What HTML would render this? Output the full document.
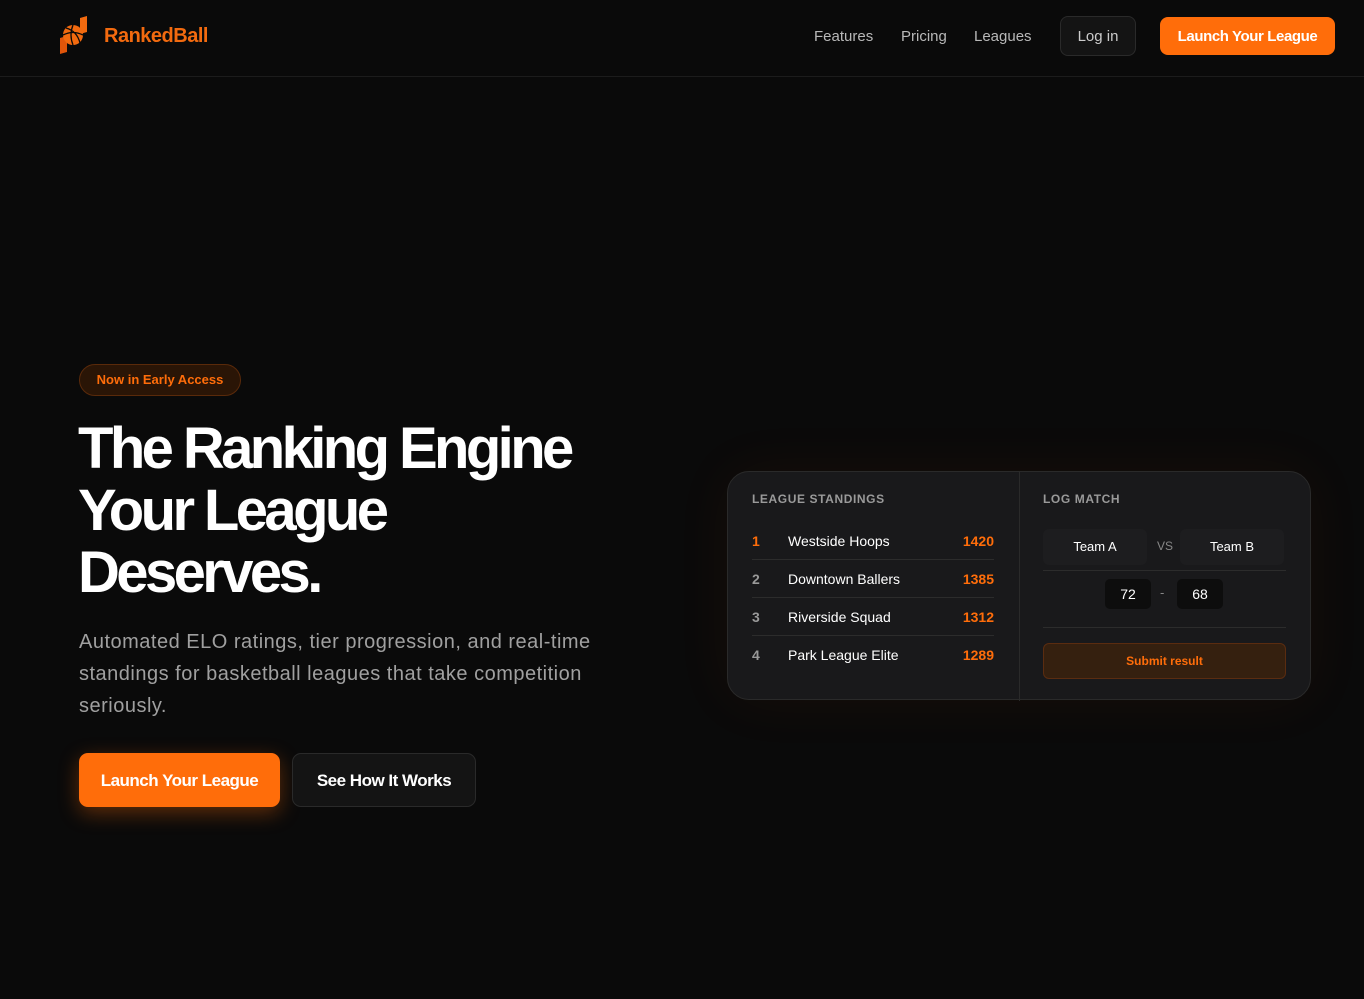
<!DOCTYPE html>
<html><head><meta charset="utf-8"><style>
*{box-sizing:border-box;margin:0;padding:0}
body{width:1364px;height:999px;background:#0a0a0a;font-family:"Liberation Sans",sans-serif;color:#fff;position:relative;overflow:hidden}
.nav{position:absolute;left:0;top:0;width:1364px;height:77px;border-bottom:1px solid #1c1c1c}
.logo{position:absolute;left:104px;top:25px;color:#f26a0f;font-weight:bold;font-size:20px;letter-spacing:-0.5px}
.nl{position:absolute;top:28px;font-size:15px;color:#b8b8b8}
.login{position:absolute;left:1060px;top:16px;width:76px;height:40px;border:1px solid #2a2a2a;border-radius:8px;background:#141414;color:#ccc;font-size:15px;text-align:center;line-height:40px}
.launch{position:absolute;left:1160px;top:17px;width:175px;height:38px;border-radius:8px;background:#ff6d0a;font-size:15px;font-weight:bold;text-align:center;line-height:39px;letter-spacing:-0.4px}
.badge{position:absolute;left:79px;top:364px;width:162px;height:32px;border:1px solid #5a2a0a;background:#2a1506;border-radius:16px;color:#ff6d0a;font-size:13px;font-weight:bold;text-align:center;line-height:30px}
h1{position:absolute;left:78px;top:418px;font-size:58px;line-height:62px;letter-spacing:-3.6px;font-weight:bold}
.sub{position:absolute;left:79px;top:626px;width:560px;font-size:20px;line-height:32px;color:#a0a0a0;letter-spacing:0.5px}
.b1{position:absolute;left:79px;top:753px;width:201px;height:54px;border-radius:9px;background:#ff6d0a;box-shadow:0 6px 20px rgba(255,109,10,.35);font-size:17px;font-weight:bold;text-align:center;line-height:55px;letter-spacing:-0.5px}
.b2{position:absolute;left:292px;top:753px;width:184px;height:54px;border-radius:9px;background:#141414;border:1px solid #2a2a2a;font-size:17px;font-weight:bold;text-align:center;line-height:53px;letter-spacing:-0.5px}
.card{position:absolute;left:727px;top:471px;width:584px;height:229px;border-radius:22px;background:#19191b;border:1px solid #2a2a2a;box-shadow:0 0 60px rgba(255,109,10,.06)}
.div{position:absolute;left:291px;top:0;width:1px;height:229px;background:#2a2a2a}
.h{position:absolute;top:20px;font-size:12px;color:#9a9a9a;letter-spacing:.6px;font-weight:bold}
.row{position:absolute;left:24px;width:242px;height:38px;font-size:14px;border-bottom:1px solid #2c2c2c}
.row span{position:absolute;top:11px}
.n{left:0;color:#999;font-weight:bold}.t{left:36px;color:#fff}.s{right:0;color:#ff6d0a;font-weight:bold}
.team{position:absolute;top:57px;width:104px;height:36px;background:#1d1d1f;border-radius:6px;text-align:center;line-height:36px;font-size:13px}
.sc{position:absolute;top:107px;width:46px;height:30px;background:#0d0d0d;border-radius:5px;text-align:center;line-height:30px;font-size:14px}
.line{position:absolute;left:315px;width:243px;height:1px;background:#2c2c2c}
.submit{position:absolute;left:315px;top:171px;width:243px;height:36px;border:1px solid #5a2c10;background:#35200f;border-radius:6px;color:#ff6d0a;font-size:12px;font-weight:bold;text-align:center;line-height:34px}
</style></head><body>
<div class="nav">
<svg style="position:absolute;left:58px;top:16px" width="32" height="38" viewBox="0 0 32 38"><path d="M22 2 L29 0 L29 16 L22 18 Z" fill="#f26a0f"/><path d="M2 22 L9 20 L9 36 L2 38 Z" fill="#e0550a"/><circle cx="15" cy="19" r="10" fill="#f26a0f"/><path d="M5 19 Q15 14 25 19 M15 9 Q11 19 15 29 M8 12 Q19 15 22 27" stroke="#0a0a0a" stroke-width="1.3" fill="none"/></svg>
<div class="logo">RankedBall</div>
<div class="nl" style="left:814px">Features</div>
<div class="nl" style="left:901px">Pricing</div>
<div class="nl" style="left:974px">Leagues</div>
<div class="login">Log in</div>
<div class="launch">Launch Your League</div>
</div>
<div class="badge">Now in Early Access</div>
<h1>The Ranking Engine<br>Your League<br>Deserves.</h1>
<div class="sub">Automated ELO ratings, tier progression, and real-time standings for basketball leagues that take competition seriously.</div>
<div class="b1">Launch Your League</div>
<div class="b2">See How It Works</div>
<div class="card">
<div class="div"></div>
<div class="h" style="left:24px">LEAGUE STANDINGS</div>
<div class="h" style="left:315px">LOG MATCH</div>
<div class="row" style="top:50px"><span class="n" style="color:#ff6d0a">1</span><span class="t">Westside Hoops</span><span class="s">1420</span></div>
<div class="row" style="top:88px"><span class="n">2</span><span class="t">Downtown Ballers</span><span class="s">1385</span></div>
<div class="row" style="top:126px"><span class="n">3</span><span class="t">Riverside Squad</span><span class="s">1312</span></div>
<div class="row" style="top:164px;border:none"><span class="n">4</span><span class="t">Park League Elite</span><span class="s">1289</span></div>
<div class="team" style="left:315px">Team A</div>
<div style="position:absolute;left:429px;top:67px;font-size:12px;color:#888">VS</div>
<div class="team" style="left:452px">Team B</div>
<div class="line" style="top:98px"></div>
<div class="sc" style="left:377px">72</div>
<div style="position:absolute;left:432px;top:113px;color:#888;font-size:13px">-</div>
<div class="sc" style="left:449px">68</div>
<div class="line" style="top:155px"></div>
<div class="submit">Submit result</div>
</div>
</body></html>
